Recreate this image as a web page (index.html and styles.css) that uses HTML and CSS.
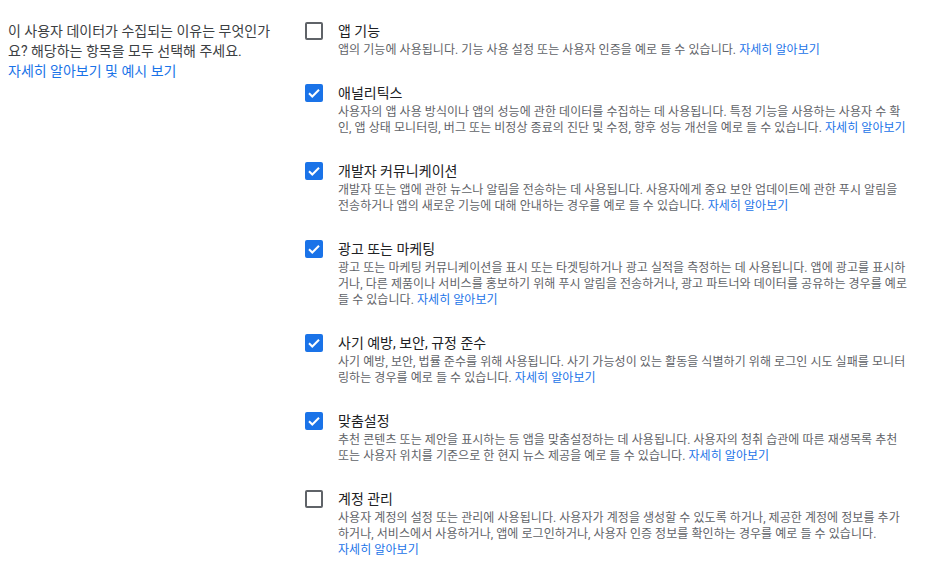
FILE: index.html
```html
<!DOCTYPE html>
<html lang="ko">
<head>
<meta charset="utf-8">
<link rel="stylesheet" href="styles.css">
</head>
<body>
<div class="page">
  <div class="intro">
    <p class="question">이 사용자 데이터가 수집되는 이유는 무엇인가요? 해당하는 항목을 모두 선택해 주세요.</p>
    <a class="link" href="#">자세히 알아보기 및 예시 보기</a>
  </div>
  <div class="options">
    <div class="option">
      <span class="box"></span>
      <div class="text">
        <div class="title">앱 기능</div>
        <div class="desc">앱의 기능에 사용됩니다. 기능 사용 설정 또는 사용자 인증을 예로 들 수 있습니다. <a class="link" href="#">자세히 알아보기</a></div>
      </div>
    </div>
    <div class="option">
      <span class="box checked"><svg viewBox="0 0 18 18" width="18" height="18"><path d="M4 9.2l3.3 3.3L14 5.8" fill="none" stroke="#fff" stroke-width="2"/></svg></span>
      <div class="text">
        <div class="title">애널리틱스</div>
        <div class="desc">사용자의 앱 사용 방식이나 앱의 성능에 관한 데이터를 수집하는 데 사용됩니다. 특정 기능을 사용하는 사용자 수 확인, 앱 상태 모니터링, 버그 또는 비정상 종료의 진단 및 수정, 향후 성능 개선을 예로 들 수 있습니다. <a class="link" href="#">자세히 알아보기</a></div>
      </div>
    </div>
    <div class="option">
      <span class="box checked"><svg viewBox="0 0 18 18" width="18" height="18"><path d="M4 9.2l3.3 3.3L14 5.8" fill="none" stroke="#fff" stroke-width="2"/></svg></span>
      <div class="text">
        <div class="title">개발자 커뮤니케이션</div>
        <div class="desc">개발자 또는 앱에 관한 뉴스나 알림을 전송하는 데 사용됩니다. 사용자에게 중요 보안 업데이트에 관한 푸시 알림을 전송하거나 앱의 새로운 기능에 대해 안내하는 경우를 예로 들 수 있습니다. <a class="link" href="#">자세히 알아보기</a></div>
      </div>
    </div>
    <div class="option">
      <span class="box checked"><svg viewBox="0 0 18 18" width="18" height="18"><path d="M4 9.2l3.3 3.3L14 5.8" fill="none" stroke="#fff" stroke-width="2"/></svg></span>
      <div class="text">
        <div class="title">광고 또는 마케팅</div>
        <div class="desc">광고 또는 마케팅 커뮤니케이션을 표시 또는 타겟팅하거나 광고 실적을 측정하는 데 사용됩니다. 앱에 광고를 표시하거나, 다른 제품이나 서비스를 홍보하기 위해 푸시 알림을 전송하거나, 광고 파트너와 데이터를 공유하는 경우를 예로 들 수 있습니다. <a class="link" href="#">자세히 알아보기</a></div>
      </div>
    </div>
    <div class="option">
      <span class="box checked"><svg viewBox="0 0 18 18" width="18" height="18"><path d="M4 9.2l3.3 3.3L14 5.8" fill="none" stroke="#fff" stroke-width="2"/></svg></span>
      <div class="text">
        <div class="title">사기 예방, 보안, 규정 준수</div>
        <div class="desc">사기 예방, 보안, 법률 준수를 위해 사용됩니다. 사기 가능성이 있는 활동을 식별하기 위해 로그인 시도 실패를 모니터링하는 경우를 예로 들 수 있습니다. <a class="link" href="#">자세히 알아보기</a></div>
      </div>
    </div>
    <div class="option">
      <span class="box checked"><svg viewBox="0 0 18 18" width="18" height="18"><path d="M4 9.2l3.3 3.3L14 5.8" fill="none" stroke="#fff" stroke-width="2"/></svg></span>
      <div class="text">
        <div class="title">맞춤설정</div>
        <div class="desc">추천 콘텐츠 또는 제안을 표시하는 등 앱을 맞춤설정하는 데 사용됩니다. 사용자의 청취 습관에 따른 재생목록 추천 또는 사용자 위치를 기준으로 한 현지 뉴스 제공을 예로 들 수 있습니다. <a class="link" href="#">자세히 알아보기</a></div>
      </div>
    </div>
    <div class="option">
      <span class="box"></span>
      <div class="text">
        <div class="title">계정 관리</div>
        <div class="desc">사용자 계정의 설정 또는 관리에 사용됩니다. 사용자가 계정을 생성할 수 있도록 하거나, 제공한 계정에 정보를 추가하거나, 서비스에서 사용하거나, 앱에 로그인하거나, 사용자 인증 정보를 확인하는 경우를 예로 들 수 있습니다.<br><a class="link" href="#">자세히 알아보기</a></div>
      </div>
    </div>
  </div>
</div>
</body>
</html>
```

FILE: styles.css
```css
html, body {
  margin: 0;
  padding: 0;
  background: #fff;
}
body {
  font-family: Roboto, "Noto Sans CJK KR", sans-serif;
  color: #202124;
}
.page {
  display: flex;
  padding: 21px 0 0 8px;
}
.intro {
  width: 270px;
  flex: none;
  font-size: 14px;
  line-height: 20px;
  color: #3c4043;
}
.question {
  margin: 0;
}
.link {
  color: #1a73e8;
  text-decoration: none;
}
.options {
  margin-left: 27px;
  width: 604.5px;
  display: flex;
  flex-direction: column;
  gap: 25px;
}
.option {
  display: flex;
  align-items: flex-start;
}
.box {
  flex: none;
  box-sizing: border-box;
  width: 18px;
  height: 18px;
  margin-top: 1px;
  border: 2px solid #5f6368;
  border-radius: 2px;
  position: relative;
}
.box.checked {
  background: #1a73e8;
  border-color: #1a73e8;
}
.box svg {
  position: absolute;
  left: -2px;
  top: -2px;
}
.text {
  margin-left: 15px;
  flex: 1;
}
.title {
  font-size: 14px;
  line-height: 20px;
  color: #202124;
}
.desc {
  font-size: 12px;
  line-height: 16px;
  color: #5f6368;
  margin-top: 1px;
  letter-spacing: 0.06px;
}
```
